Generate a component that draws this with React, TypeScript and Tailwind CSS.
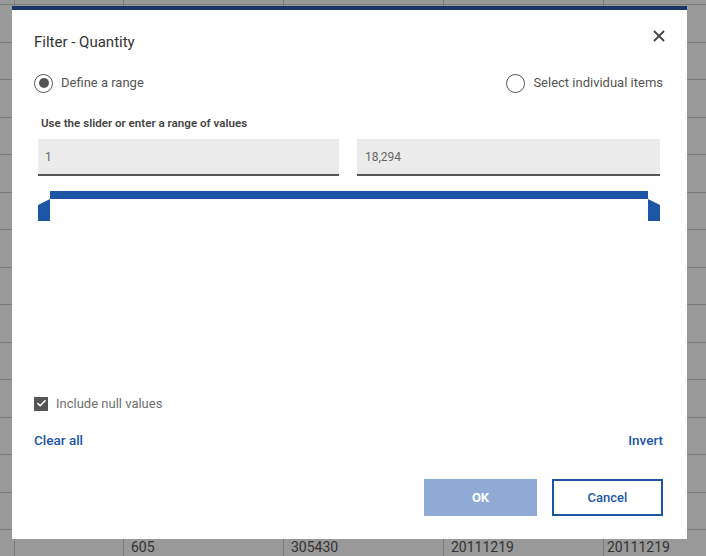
import { Check } from 'lucide-react';

const ROWS = [
  'h-[5px]', 'h-[38px]', 'h-[37px]', 'h-[38px]', 'h-[37px]', 'h-[38px]', 'h-[37px]', 'h-[38px]',
  'h-[37px]', 'h-[38px]', 'h-[37px]', 'h-[38px]', 'h-[37px]', 'h-[38px]', 'h-[37px]',
];
const COLS = ['w-[15px]', 'w-[109px]', 'w-[160px]', 'w-[160px]', 'w-[160px]'];
const LAST = ['', '', '605', '305430', '20111219'];

const line = 'border-[#7b7b7b]';

function Handle({ flip }: { flip?: boolean }) {
  return (
    <svg width="12" height="22" viewBox="0 0 12 22" className="block">
      <polygon points={flip ? '0,0 12,6 12,22 0,22' : '0,6 12,0 12,22 0,22'} fill="#1d56a5" />
    </svg>
  );
}

function Radio({ on, label }: { on?: boolean; label: string }) {
  return (
    <div className="flex items-center gap-[8px]">
      <span className="w-[19px] h-[19px] rounded-full border border-[#555] flex items-center justify-center">
        {on && <span className="w-[10px] h-[10px] rounded-full bg-[#555]" />}
      </span>
      <span className="text-[13px] leading-[20px] text-[#555]">{label}</span>
    </div>
  );
}

export default function App() {
  return (
    <div className="relative w-[706px] h-[556px] overflow-hidden bg-[#999999] font-['Roboto',sans-serif]">
      {/* spreadsheet behind the dialog */}
      {ROWS.map((h, i) => (
        <div key={i} className={`${h} flex border-b ${line}`}>
          {COLS.map((w, j) => <div key={j} className={`${w} h-full border-r ${line}`} />)}
          <div className="flex-1" />
        </div>
      ))}
      <div className="h-[26px] flex">
        {COLS.map((w, j) => (
          <div key={j} className={`${w} h-full border-r ${line} pl-[7px] pt-[9px] text-[14px] leading-[17px] text-[#333]`}>
            {LAST[j]}
          </div>
        ))}
        <div className="flex-1 pl-[3px] pt-[9px] text-[14px] leading-[17px] text-[#333]">20111219</div>
      </div>

      {/* dialog */}
      <div className="absolute left-[12px] top-[6px] w-[675px] h-[533px] bg-white border-t-4 border-[#1b3564] pl-[22px] pr-[24px] flex flex-col">
        <div className="mt-[22px] flex justify-between">
          <h2 className="text-[15px] leading-[20px] text-[#333]">Filter - Quantity</h2>
          <svg width="12" height="12" viewBox="0 0 12 12" className="-mt-[2px] mr-[-2px]">
            <path d="M1 1L11 11M11 1L1 11" stroke="#444" strokeWidth="1.8" />
          </svg>
        </div>

        <div className="mt-[21px] flex justify-between">
          <Radio on label="Define a range" />
          <Radio label="Select individual items" />
        </div>

        <p className="mt-[23px] ml-[7px] text-[11.6px] leading-[14px] font-semibold text-[#444]">
          Use the slider or enter a range of values
        </p>

        <div className="mt-[9px] ml-[4px] mr-[3px] flex gap-[18px]">
          <input readOnly value="1" className="flex-1 min-w-0 h-[37px] bg-[#ebebeb] border-b-2 border-[#565656] px-[7px] text-[12px] text-[#666] outline-none" />
          <input readOnly value="18,294" className="flex-1 min-w-0 h-[37px] bg-[#ebebeb] border-b-2 border-[#565656] px-[8px] text-[12px] text-[#666] outline-none" />
        </div>

        <div className="mt-[15px] ml-[4px] mr-[3px] flex">
          <div className="pt-[8px]"><Handle /></div>
          <div className="flex-1 h-[8px] bg-[#1d56a5]" />
          <div className="pt-[8px]"><Handle flip /></div>
        </div>

        <label className="mt-[175px] flex items-center gap-[8px]">
          <span className="w-[14px] h-[14px] bg-[#555] flex items-center justify-center">
            <Check className="w-[11px] h-[11px] text-white" strokeWidth={3.5} />
          </span>
          <span className="text-[13px] leading-[15px] text-[#6f6f6f]">Include null values</span>
        </label>

        <div className="mt-[20px] flex justify-between text-[13.5px] leading-[18px] font-medium text-[#1d56a5]">
          <span>Clear all</span>
          <span>Invert</span>
        </div>

        <div className="mt-[30px] flex justify-end gap-[15px]">
          <button className="w-[113px] h-[37px] bg-[#8eaad5] text-white text-[13px] font-bold">OK</button>
          <button className="w-[111px] h-[37px] border-2 border-[#1d56a5] text-[#1d56a5] text-[13px] font-medium">Cancel</button>
        </div>
      </div>
    </div>
  );
}
